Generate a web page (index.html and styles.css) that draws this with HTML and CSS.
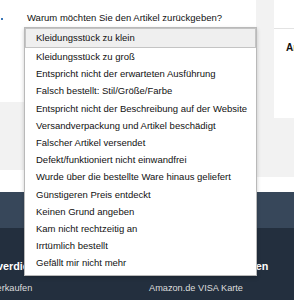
FILE: index.html
```html
<!DOCTYPE html>
<html lang="de">
<head>
  <meta charset="UTF-8">
  <meta name="viewport" content="width=device-width, initial-scale=1.0">
  <title>Artikel zurückgeben</title>
  <link rel="stylesheet" href="styles.css">
</head>
<body>
  <div class="page">
    <div class="top">
      <div class="main-col">
        <div class="main-card">
          <span class="crumb"></span>
          <p class="question">Warum möchten Sie den Artikel zurückgeben?</p>
        </div>
        <div class="fill"></div>
        <div class="strip"></div>
      </div>
      <div class="gutter"></div>
      <div class="side-col">
        <div class="side-card">
          <div class="rule"></div>
          <h3>Artikel</h3>
        </div>
        <div class="fill"></div>
        <div class="strip short"></div>
      </div>
    </div>

    <footer>
      <div class="back-top">Zurück zum Seitenanfang</div>
      <div class="footer-main">
        <div class="footer-col first">
          <h4>Geld verdienen mit uns</h4>
          <a href="#">Jetzt verkaufen</a>
        </div>
        <div class="footer-col">
          <h4>Amazon Zahlungsarten</h4>
          <a href="#">Amazon.de VISA Karte</a>
        </div>
      </div>
    </footer>

    <!-- open select list -->
    <ul class="reasons">
      <li class="active">Kleidungsstück zu klein</li>
      <li>Kleidungsstück zu groß</li>
      <li>Entspricht nicht der erwarteten Ausführung</li>
      <li>Falsch bestellt: Stil/Größe/Farbe</li>
      <li>Entspricht nicht der Beschreibung auf der Website</li>
      <li>Versandverpackung und Artikel beschädigt</li>
      <li>Falscher Artikel versendet</li>
      <li>Defekt/funktioniert nicht einwandfrei</li>
      <li>Wurde über die bestellte Ware hinaus geliefert</li>
      <li>Günstigeren Preis entdeckt</li>
      <li>Keinen Grund angeben</li>
      <li>Kam nicht rechtzeitig an</li>
      <li>Irrtümlich bestellt</li>
      <li>Gefällt mir nicht mehr</li>
    </ul>
  </div>
</body>
</html>
```

FILE: styles.css
```css
* {
  margin: 0;
  padding: 0;
  box-sizing: border-box;
}

body {
  font-family: "Liberation Sans", Arial, sans-serif;
  background-color: #fff;
  color: #111;
  overflow: hidden;
}

.page {
  position: relative;
  width: 294px;
  height: 300px;
  overflow: hidden;
}

/* page content behind the list */
.top {
  display: flex;
  height: 192px;
}

.main-col {
  flex: 0 0 256px;
  display: flex;
  flex-direction: column;
}

.main-card {
  height: 102px;
  display: flex;
  align-items: flex-start;
  background-color: #fff;
}

.crumb {
  width: 2px;
  height: 2px;
  margin: 18px 0 0 1px;
  background-color: #3a77b8;
}

.question {
  margin: 12px 0 0 24px;
  font-size: 9.5px;
  line-height: 11px;
  color: #111;
  white-space: nowrap;
}

.fill {
  flex: 1;
  background-color: #f2f2f2;
}

.strip {
  height: 22px;
  background-color: #fff;
}

.strip.short {
  height: 15px;
}

.gutter {
  flex: 0 0 18px;
  background-color: #f2f2f2;
  border-bottom: 15px solid #fff;
}

.side-col {
  flex: 1;
  min-width: 0;
  overflow: hidden;
  display: flex;
  flex-direction: column;
}

.side-card {
  height: 118px;
  background-color: #fff;
  padding-top: 28px;
}

.rule {
  height: 1px;
  background-color: #e3e3e3;
}

.side-card h3 {
  margin: 13px 0 0 12px;
  font-size: 10px;
  line-height: 12px;
  font-weight: 700;
  color: #111;
  white-space: nowrap;
}

/* footer */
.back-top {
  height: 36px;
  line-height: 36px;
  background-color: #37475a;
  color: #fff;
  font-size: 9.5px;
  text-align: center;
}

.footer-main {
  height: 72px;
  display: flex;
  padding-top: 31px;
  background-color: #232f3e;
}

.footer-col {
  flex-shrink: 0;
  white-space: nowrap;
}

.footer-col.first {
  width: 179px;
  margin-left: -30px;
}

.footer-col h4 {
  font-size: 10.8px;
  line-height: 14px;
  font-weight: 700;
  color: #fff;
}

.footer-col a {
  display: block;
  margin-top: 8px;
  font-size: 9.2px;
  line-height: 14px;
  color: #ddd;
  text-decoration: none;
}

/* dropdown list */
.reasons {
  position: absolute;
  left: 24px;
  top: 27px;
  width: 233px;
  height: 249px;
  list-style: none;
  background-color: #fff;
  border: 1px solid #b9b9b9;
  box-shadow: 0 2px 4px rgba(0, 0, 0, 0.2);
}

.reasons li {
  height: 17.2px;
  line-height: 17.2px;
  padding-left: 11px;
  font-size: 9.5px;
  color: #111;
  white-space: nowrap;
}

.reasons li.active {
  height: 20px;
  line-height: 18px;
  padding-left: 10px;
  border: 1px solid #c4c4c4;
  background-color: #efefef;
}
```
